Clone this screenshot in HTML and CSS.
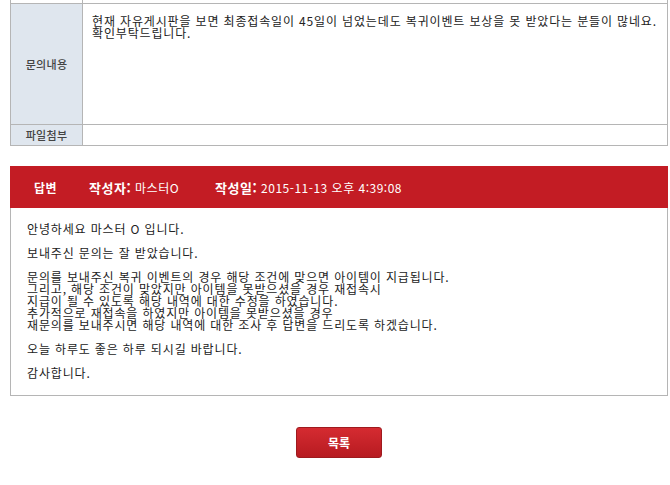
FILE: index.html
```html
<!DOCTYPE html>
<html lang="ko">
<head>
  <meta charset="UTF-8">
  <title>문의 상세</title>
  <link rel="stylesheet" href="styles.css">
</head>
<body>

  <div class="wrap">
    <table class="question">
      <tr class="prev-row">
        <th></th>
        <td></td>
      </tr>
      <tr class="content-row">
        <th>문의내용</th>
        <td>
          <p class="question-text">현재 자유게시판을 보면 최종접속일이 45일이 넘었는데도 복귀이벤트 보상을 못 받았다는 분들이 많네요.<br>확인부탁드립니다.</p>
        </td>
      </tr>
      <tr class="file-row">
        <th>파일첨부</th>
        <td></td>
      </tr>
    </table>

    <div class="answer">
      <div class="answer-head">
        <span class="answer-tag">답변</span>
        <span class="meta"><b>작성자:</b> 마스터O</span>
        <span class="meta"><b>작성일:</b> 2015-11-13 오후 4:39:08</span>
      </div>
      <div class="answer-body">
        <p>안녕하세요 마스터 O 입니다.</p>
        <p>보내주신 문의는 잘 받았습니다.</p>
        <p>문의를 보내주신 복귀 이벤트의 경우 해당 조건에 맞으면 아이템이 지급됩니다.<br>
        그리고, 해당 조건이 맞았지만 아이템을 못받으셨을 경우 재접속시<br>
        지급이 될 수 있도록 해당 내역에 대한 수정을 하였습니다.<br>
        추가적으로 재접속을 하였지만 아이템을 못받으셨을 경우<br>
        재문의를 보내주시면 해당 내역에 대한 조사 후 답변을 드리도록 하겠습니다.</p>
        <p>오늘 하루도 좋은 하루 되시길 바랍니다.</p>
        <p>감사합니다.</p>
      </div>
    </div>

    <div class="buttons">
      <button class="btn-list">목록</button>
    </div>
  </div>

</body>
</html>
```

FILE: styles.css
```css
body {
  margin: 0;
  font-family: "Noto Sans CJK KR", "Liberation Sans", sans-serif;
  font-size: 12px;
  letter-spacing: 0.85px;
  color: #222;
  background-color: #fff;
}

.wrap {
  width: 658px;
  margin-left: 10px;
}

/* question table */
.question {
  width: 100%;
  border-collapse: collapse;
  border-left: 1px solid #b5b5b5;
  border-right: 1px solid #b5b5b5;
}

.question th,
.question td {
  border-bottom: 1px solid #b5b5b5;
  padding: 0;
}

.question th {
  width: 71px;
  border-right: 1px solid #b5b5b5;
  background-color: #dfe6ee;
  color: #444;
  font-size: 11px;
  font-weight: 500;
  letter-spacing: 0.3px;
  text-align: center;
}

.prev-row th,
.prev-row td {
  height: 3px;
  background-color: #fff;
}

.content-row th,
.content-row td {
  height: 120px;
}

.content-row td {
  vertical-align: top;
}

.file-row th,
.file-row td {
  height: 20px;
}

.question-text {
  margin: 0;
  padding: 11px 9px;
  line-height: 12px;
}

/* answer */
.answer {
  margin-top: 20px;
  border: 1px solid #b5b5b5;
  border-top: none;
}

.answer-head {
  display: flex;
  align-items: center;
  height: 42px;
  margin: 0 -1px 0 -1px;
  padding-left: 24px;
  background-color: #c31c24;
  color: #fff;
  letter-spacing: 0.5px;
}

.answer-tag {
  font-weight: bold;
  font-size: 12px;
  margin-right: 32px;
}

.meta {
  margin-right: 36px;
}

.meta b {
  font-size: 13px;
}

.answer-body {
  padding: 15px 16px 16px;
  line-height: 12px;
}

.answer-body p {
  margin: 0 0 12px;
}

.answer-body p:last-child {
  margin-bottom: 0;
}

/* buttons */
.buttons {
  display: flex;
  justify-content: center;
  padding-top: 31px;
}

.btn-list {
  width: 86px;
  height: 31px;
  border: 1px solid #9e1a1e;
  border-radius: 3px;
  background: linear-gradient(#d52b31, #b71b21);
  color: #fff;
  font-family: inherit;
  font-size: 12px;
  font-weight: bold;
  cursor: pointer;
}

.btn-list:hover {
  background: #a8181d;
}
```
